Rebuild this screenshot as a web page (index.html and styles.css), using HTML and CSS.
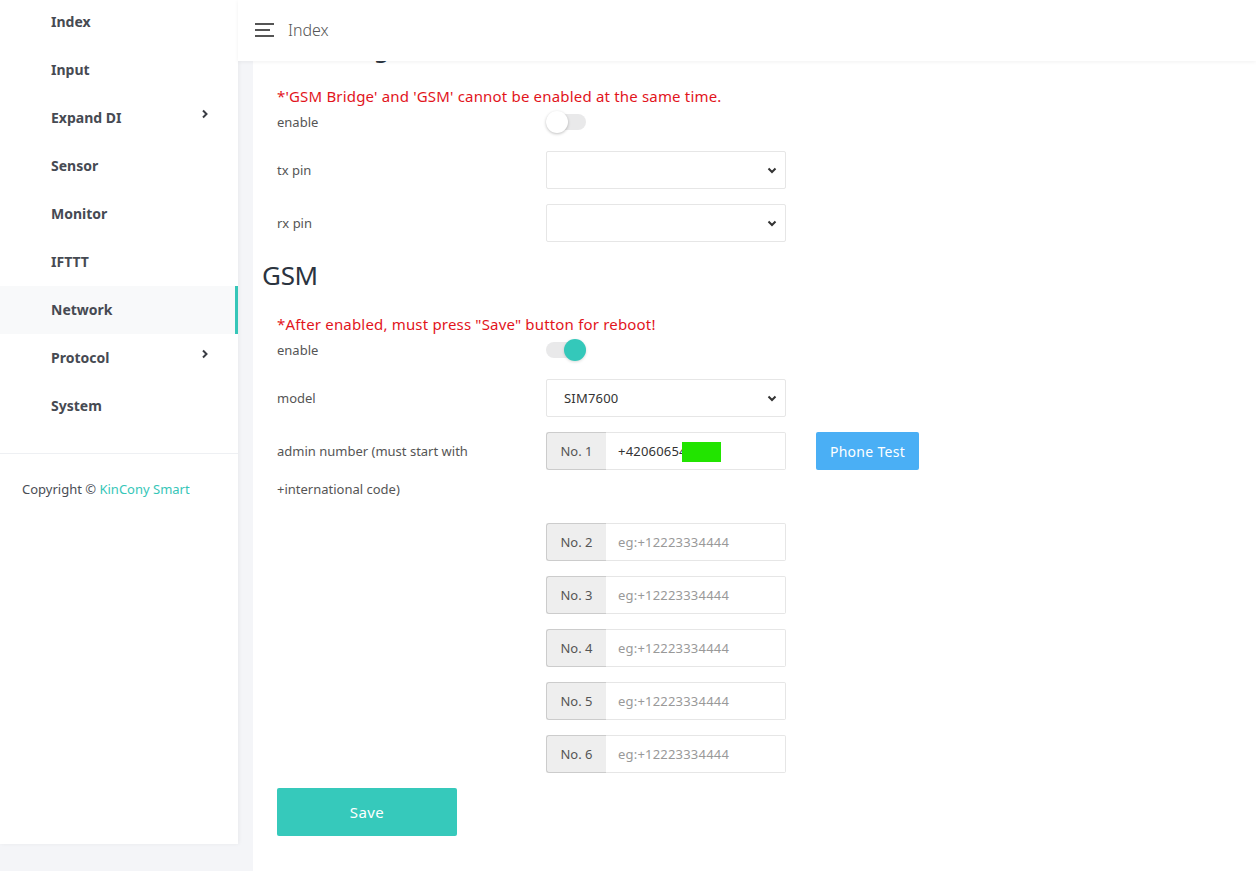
FILE: index.html
```html
<!DOCTYPE html>
<html lang="en">
<head>
  <meta charset="UTF-8" />
  <title>Network</title>
  <link rel="stylesheet" href="styles.css">
</head>
<body>

  <aside class="sidebar">
    <div class="sidebar-inner">
      <ul class="menu">
        <li class="menu-item">Index</li>
        <li class="menu-item">Input</li>
        <li class="menu-item has-sub">Expand DI
          <svg class="chev" width="8" height="10" viewBox="0 0 8 10"><polyline points="2,1.5 5.5,5 2,8.5" fill="none" stroke="#3a3d44" stroke-width="2"/></svg>
        </li>
        <li class="menu-item">Sensor</li>
        <li class="menu-item">Monitor</li>
        <li class="menu-item">IFTTT</li>
        <li class="menu-item active">Network</li>
        <li class="menu-item has-sub">Protocol
          <svg class="chev" width="8" height="10" viewBox="0 0 8 10"><polyline points="2,1.5 5.5,5 2,8.5" fill="none" stroke="#3a3d44" stroke-width="2"/></svg>
        </li>
        <li class="menu-item">System</li>
      </ul>
      <div class="copyright">Copyright © <span class="brand">KinCony Smart</span></div>
    </div>
  </aside>

  <div class="page">
    <header class="topbar">
      <svg class="burger" width="20" height="14" viewBox="0 0 20 14">
        <rect x="0" y="0" width="19" height="2" fill="#555"/>
        <rect x="0" y="6" width="15" height="2" fill="#555"/>
        <rect x="0" y="12" width="19" height="2" fill="#555"/>
      </svg>
      <span class="crumb">Index</span>
    </header>

    <main class="main">
      <div class="content">
        <h3 class="section-title">GSM Bridge</h3>
        <div class="form">
          <div class="note">*'GSM Bridge' and 'GSM' cannot be enabled at the same time.</div>
          <div class="row row-switch">
            <label class="label">enable</label>
            <span class="switch"><span class="knob"></span></span>
          </div>
          <div class="row">
            <label class="label">tx pin</label>
            <div class="select-wrap">
              <select class="control"><option></option></select>
              <svg class="arrow" width="10" height="7" viewBox="0 0 10 7"><polyline points="1.5,1.5 5,5 8.5,1.5" fill="none" stroke="#333" stroke-width="2"/></svg>
            </div>
          </div>
          <div class="row">
            <label class="label">rx pin</label>
            <div class="select-wrap">
              <select class="control"><option></option></select>
              <svg class="arrow" width="10" height="7" viewBox="0 0 10 7"><polyline points="1.5,1.5 5,5 8.5,1.5" fill="none" stroke="#333" stroke-width="2"/></svg>
            </div>
          </div>
        </div>

        <h3 class="section-title">GSM</h3>
        <div class="form">
          <div class="note">*After enabled, must press "Save" button for reboot!</div>
          <div class="row row-switch">
            <label class="label">enable</label>
            <span class="switch on"><span class="knob"></span></span>
          </div>
          <div class="row">
            <label class="label">model</label>
            <div class="select-wrap">
              <select class="control"><option>SIM7600</option></select>
              <svg class="arrow" width="10" height="7" viewBox="0 0 10 7"><polyline points="1.5,1.5 5,5 8.5,1.5" fill="none" stroke="#333" stroke-width="2"/></svg>
            </div>
          </div>
          <div class="row row-admin">
            <label class="label label-wrap">admin number (must start with +international code)</label>
            <div class="input-group">
              <span class="addon">No. 1</span>
              <div class="masked">
                <input class="control" type="text" value="+42060654">
                <span class="redact"></span>
              </div>
            </div>
            <button class="btn-test">Phone Test</button>
          </div>
          <div class="row">
            <span class="label"></span>
            <div class="input-group">
              <span class="addon">No. 2</span>
              <input class="control" type="text" placeholder="eg:+12223334444">
            </div>
          </div>
          <div class="row">
            <span class="label"></span>
            <div class="input-group">
              <span class="addon">No. 3</span>
              <input class="control" type="text" placeholder="eg:+12223334444">
            </div>
          </div>
          <div class="row">
            <span class="label"></span>
            <div class="input-group">
              <span class="addon">No. 4</span>
              <input class="control" type="text" placeholder="eg:+12223334444">
            </div>
          </div>
          <div class="row">
            <span class="label"></span>
            <div class="input-group">
              <span class="addon">No. 5</span>
              <input class="control" type="text" placeholder="eg:+12223334444">
            </div>
          </div>
          <div class="row">
            <span class="label"></span>
            <div class="input-group">
              <span class="addon">No. 6</span>
              <input class="control" type="text" placeholder="eg:+12223334444">
            </div>
          </div>
          <button class="btn-save">Save</button>
        </div>
      </div>
    </main>
  </div>

</body>
</html>
```

FILE: styles.css
```css
* {
  box-sizing: border-box;
}

body {
  margin: 0;
  background-color: #f4f5f8;
  font-family: "Noto Sans", sans-serif;
  height: 100vh;
  display: flex;
  overflow: hidden;
  color: #555;
}

/* sidebar */
.sidebar {
  width: 238px;
  flex-shrink: 0;
}

.sidebar-inner {
  height: 846px;
  background-color: #fff;
  box-shadow: 1px 0 4px rgba(0, 0, 0, 0.05);
}

.menu {
  list-style: none;
  margin: -2px 0 0;
  padding: 0 0 23px;
  border-bottom: 1px solid #eef0f3;
}

.menu-item {
  position: relative;
  height: 48px;
  line-height: 48px;
  padding-left: 51px;
  font-size: 14px;
  font-weight: 700;
  color: #464a52;
}

.menu-item.active {
  background-color: #f8f9fa;
  border-right: 3px solid #36c6b8;
}

.chev {
  position: absolute;
  left: 201px;
  top: 15px;
}

.copyright {
  padding: 26px 22px;
  font-size: 13px;
  color: #4a4d55;
}

.brand {
  color: #36c6b8;
}

/* right side */
.page {
  flex: 1;
  display: flex;
  flex-direction: column;
  height: 100vh;
}

.topbar {
  position: relative;
  height: 61px;
  flex-shrink: 0;
  background-color: #fff;
  box-shadow: 0 1px 4px rgba(0, 0, 0, 0.06);
  display: flex;
  align-items: center;
  padding: 0 0 2px 17px;
  z-index: 2;
}

.burger {
  margin-right: 13px;
}

.crumb {
  font-size: 16px;
  color: #555;
  font-weight: 300;
}

.main {
  flex: 1;
  margin-left: 15px;
  background-color: #fff;
  overflow: hidden;
}

/* page is scrolled a little, the first title sits under the header */
.content {
  margin-top: -47px;
  padding-left: 9px;
}

.section-title {
  margin: 16px 0 22px;
  font-size: 26px;
  line-height: 34px;
  height: 34px;
  font-weight: 400;
  color: #2b3440;
  letter-spacing: -0.3px;
}

.form {
  padding-left: 15px;
}

.note {
  font-size: 15px;
  line-height: 20px;
  color: #e2141c;
  letter-spacing: 0.18px;
}

.row {
  display: flex;
  align-items: center;
  margin-bottom: 15px;
  min-height: 38px;
}

.row-switch {
  min-height: 32px;
  height: 32px;
  margin-bottom: 13px;
}

.label {
  width: 269px;
  flex-shrink: 0;
  font-size: 13px;
  color: #555;
}

.label-wrap {
  line-height: 38px;
  padding-right: 60px;
}

.row-admin {
  align-items: flex-start;
}

.switch {
  position: relative;
  width: 40px;
  height: 16px;
  border-radius: 8px;
  background-color: #e9e9ea;
}

.knob {
  position: absolute;
  top: -3px;
  left: 0;
  width: 22px;
  height: 22px;
  border-radius: 50%;
  background-color: #fff;
  box-shadow: 0 1px 3px rgba(0, 0, 0, 0.25);
}

.switch.on .knob {
  left: auto;
  right: 0;
  background-color: #34c8ba;
  box-shadow: 0 1px 3px rgba(0, 0, 0, 0.15);
}

.select-wrap {
  position: relative;
  width: 240px;
}

.control {
  width: 100%;
  height: 38px;
  border: 1px solid #e6e6e6;
  border-radius: 2px;
  background-color: #fff;
  padding: 0 12px;
  font-family: "Noto Sans", sans-serif;
  font-size: 13px;
  letter-spacing: 0.2px;
  color: #333;
  outline: none;
  appearance: none;
}

select.control {
  padding: 0 17px;
}

.control::placeholder {
  color: #999;
}

.arrow {
  position: absolute;
  right: 9px;
  top: 16px;
}

.input-group {
  display: flex;
  width: 240px;
}

.addon {
  width: 60px;
  flex-shrink: 0;
  height: 38px;
  line-height: 36px;
  text-align: center;
  background-color: #eee;
  border: 1px solid #ccc;
  border-right: none;
  border-radius: 3px 0 0 3px;
  font-size: 13px;
  color: #555;
}

.input-group .control {
  border-left: none;
  border-radius: 0 2px 2px 0;
}

.masked {
  position: relative;
  flex: 1;
}

.redact {
  position: absolute;
  left: 76px;
  top: 10px;
  width: 39px;
  height: 20px;
  background-color: #22e400;
}

.btn-test {
  margin-left: 30px;
  width: 103px;
  height: 38px;
  border: none;
  border-radius: 2px;
  background-color: #4aaff5;
  color: #fff;
  font-family: "Noto Sans", sans-serif;
  font-size: 14px;
  letter-spacing: 0.3px;
}

.btn-save {
  width: 180px;
  height: 48px;
  border: none;
  border-radius: 2px;
  background-color: #36c9bb;
  color: #fff;
  font-family: "Noto Sans", sans-serif;
  font-size: 15px;
  letter-spacing: 0.4px;
}
```
